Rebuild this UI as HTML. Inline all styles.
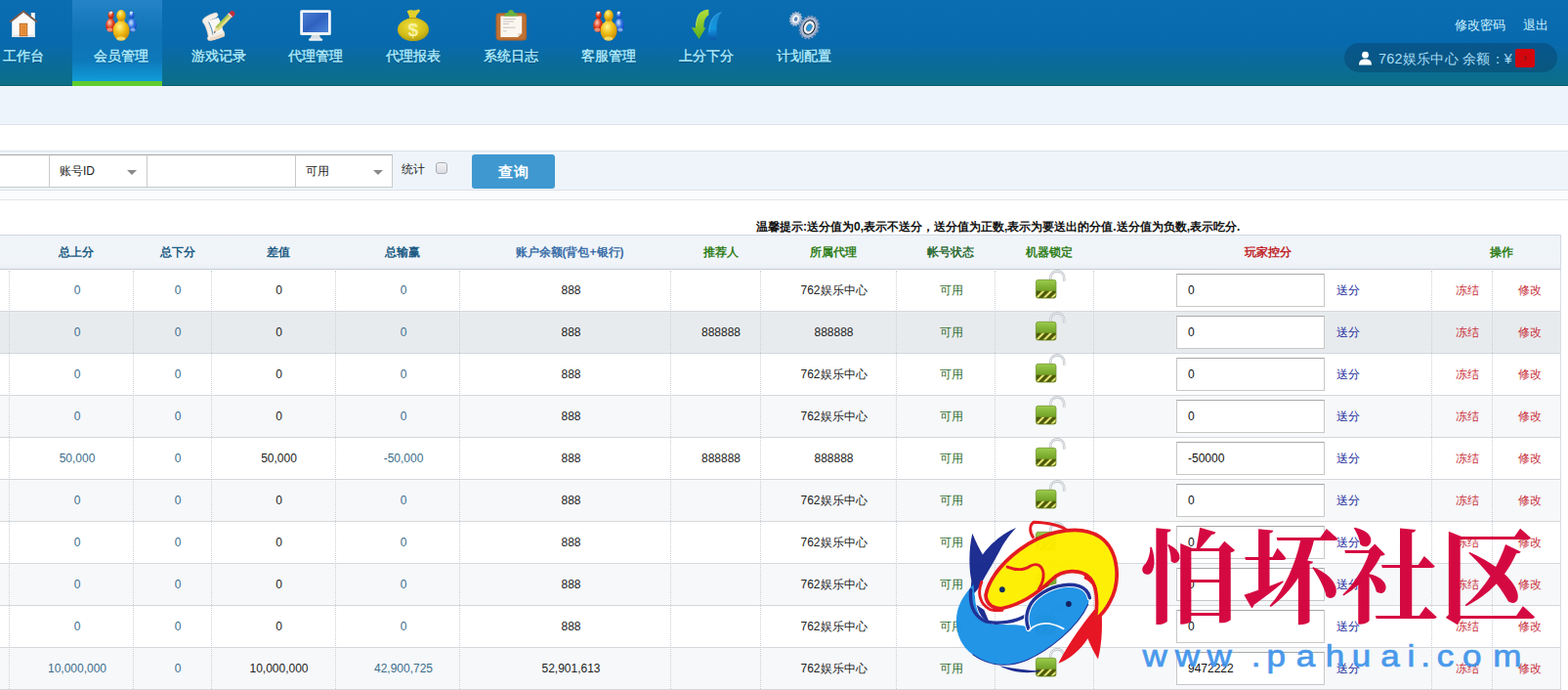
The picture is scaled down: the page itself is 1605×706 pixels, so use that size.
<!DOCTYPE html>
<html lang="zh"><head><meta charset="utf-8"><title>会员管理</title>
<style>
html,body{margin:0;padding:0;background:#fff;}
body{width:1605px;height:706px;overflow:hidden;font-family:"Liberation Sans",sans-serif;font-size:12px;color:#222;}
#pg{position:relative;width:1605px;height:706px;overflow:hidden;background:#fff;}
#pg div,#pg svg,#pg span{position:absolute;box-sizing:border-box;}
.hd{left:0;top:0;width:1605px;height:88px;background:linear-gradient(to bottom,#0a6db2 0%,#086aae 50%,#0a6b9c 72%,#0c6f86 100%);border-bottom:1px solid #0a5c74;}
.act{left:74px;top:0;width:92px;height:88px;background:linear-gradient(to bottom,#2483c6 0%,#0f74b6 40%,#0d78ba 70%,#119ad6 93%,#119ad6 100%);}
.act i{position:absolute;left:0;bottom:0;width:92px;height:5px;background:#5ecb2f;}
.nt{top:47.5px;width:100px;height:18px;line-height:18px;text-align:center;font-size:14px;color:#b2eeff;-webkit-text-stroke:0.35px #b2eeff;text-shadow:0 1px 1px rgba(0,40,80,.55);white-space:nowrap;}
.tl{top:16.5px;height:18px;line-height:18px;font-size:12.5px;color:#c8f1ff;white-space:nowrap;}
.pill{left:1376px;top:44px;width:218px;height:30px;border-radius:15px;background:rgba(6,60,100,.42);}
.pill span{left:35px;top:1px;height:30px;line-height:31px;font-size:14.4px;letter-spacing:0.25px;color:#a9def5;white-space:nowrap;}
.band1{left:0;top:88px;width:1605px;height:40px;background:#eef4fb;border-bottom:1px solid #dde3ea;}
.band2{left:0;top:154px;width:1605px;height:41px;background:#eef4fa;border-top:1px solid #dbe2e9;border-bottom:1px solid #dbe2e9;}
.band3{left:0;top:195px;width:1605px;height:10px;background:#fbfcfe;border-bottom:1px solid #e3e7ec;}
.fi{top:158px;height:34px;background:#fff;border:1px solid #c9c9c9;border-top-color:#a8a8a8;line-height:33px;font-size:12px;color:#222;padding-left:10px;white-space:nowrap;}
.car{width:0;height:0;border-left:5px solid transparent;border-right:5px solid transparent;border-top:5px solid #8a8a8a;top:174px;}
.btn{left:483px;top:158px;width:85px;height:35px;background:#3f98cf;border-radius:3px;color:#fff;font-weight:bold;font-size:15px;line-height:35px;text-align:center;letter-spacing:1px;}
.cb{left:446px;top:166px;width:12px;height:12px;border:1px solid #a9adb5;border-radius:3px;background:linear-gradient(#f2f2f4,#dcdde2);}
.hint{left:774px;top:224px;height:16px;line-height:16px;font-weight:bold;font-size:12px;color:#111;white-space:nowrap;}
.thead{left:0;top:240px;width:1598px;height:36px;background:linear-gradient(#eff4f9,#f1f5f9 80%,#eaeff3);border-top:1px solid #d3d9de;border-bottom:1px solid #c6cdd3;border-right:1px solid #d3d9de;box-shadow:0 1px 1px rgba(0,0,0,.06);}
.tr{left:0;width:1598px;height:43px;background:#fff;border-bottom:1px solid #d4d8dc;border-right:1px solid #d9dde1;}
.tr.alt{background:#f6f8fa;}
.tr.hov{background:#e8ebee;}
.vl{top:277px;width:0;height:430px;border-left:1px dotted #cbd0d4;}
.th{top:240.5px;width:200px;height:35px;line-height:35px;text-align:center;font-weight:bold;font-size:12px;white-space:nowrap;}
.td{width:200px;height:42px;line-height:42px;text-align:center;font-size:12px;white-space:nowrap;}
.lock{left:1058px;}
.inp{left:1204px;width:152px;height:34px;border:1px solid #c8c8c8;border-top-color:#a9a9a9;background:#fff;line-height:32px;padding-left:11px;font-size:12px;color:#111;}
.lk{height:42px;line-height:42px;font-size:12px;white-space:nowrap;}
.sf{left:1368px;color:#1b2a9c;}
.dj{left:1490px;color:#c9303a;}
.xg{left:1554px;color:#c9303a;}
.wm{left:0;top:0;}
</style></head><body>
<div id="pg">
<svg width="0" height="0" style="left:0;top:0"><defs>
<linearGradient id="lg" x1="0" y1="0" x2="0" y2="1"><stop offset="0" stop-color="#9ccc4c"/><stop offset="0.5" stop-color="#78a82c"/><stop offset="1" stop-color="#5c8818"/></linearGradient>
<g id="lk">
<path d="M17.200 11.500 V8.300 a7 7 0 0 1 14 0 V11.800" fill="none" stroke="#c3c7cc" stroke-width="2.700"/>
<path d="M17.200 11.500 V8.300 a7 7 0 0 1 14 0 V11.800" fill="none" stroke="#f4f6f8" stroke-width="0.900"/>
<rect x="2.400" y="10.300" width="20.600" height="18.800" rx="2.400" fill="url(#lg)" stroke="#6a8c22" stroke-width="0.700"/>
<path d="M2.800 21.800 h19.800 v5 a2 2 0 0 1 -2 2 h-15.800 a2 2 0 0 1 -2 -2z" fill="#4c5a0a"/>
<path d="M3 27.400 l5.600 -5.600 h3 l-6.600 6.600 h-.8z M9.600 28.600 l6.800 -6.800 h3 l-6.800 6.800z M17.400 28.600 l5.200 -5.200 v3 l-2.400 2.200z" fill="#e2e274"/>
</g>
</defs></svg>
<div class="hd"></div>
<div class="act"><i></i></div>
<!--NAV-->
<div class="nt" style="left:-26px">工作台</div>
<div class="nt" style="left:74px">会员管理</div>
<div class="nt" style="left:174px">游戏记录</div>
<div class="nt" style="left:273px">代理管理</div>
<div class="nt" style="left:373px">代理报表</div>
<div class="nt" style="left:473px">系统日志</div>
<div class="nt" style="left:573px">客服管理</div>
<div class="nt" style="left:673px">上分下分</div>
<div class="nt" style="left:773px">计划配置</div>
<svg style="left:0;top:0" width="900" height="48" viewBox="0 0 900 48">
<defs>
<radialGradient id="gy" cx="0.4" cy="0.3" r="0.8"><stop offset="0" stop-color="#fff48c"/><stop offset="0.45" stop-color="#f0bc14"/><stop offset="1" stop-color="#c07c00"/></radialGradient>
<radialGradient id="gr" cx="0.4" cy="0.3" r="0.8"><stop offset="0" stop-color="#ffd0c0"/><stop offset="0.45" stop-color="#e0401c"/><stop offset="1" stop-color="#b01808"/></radialGradient>
<radialGradient id="gb" cx="0.4" cy="0.3" r="0.8"><stop offset="0" stop-color="#d0e8ff"/><stop offset="0.45" stop-color="#2c6ee0"/><stop offset="1" stop-color="#0a3cb0"/></radialGradient>
<radialGradient id="gbag" cx="0.45" cy="0.35" r="0.75"><stop offset="0" stop-color="#f0e23a"/><stop offset="0.6" stop-color="#d2bc18"/><stop offset="1" stop-color="#9c8e10"/></radialGradient>
<linearGradient id="gmon" x1="0" y1="0" x2="1" y2="1"><stop offset="0" stop-color="#4a7ed0"/><stop offset="0.5" stop-color="#2f62c0"/><stop offset="1" stop-color="#4a84d8"/></linearGradient>
<linearGradient id="ggr" x1="0" y1="0" x2="0" y2="1"><stop offset="0" stop-color="#b4e03a"/><stop offset="1" stop-color="#5cae1c"/></linearGradient>
<linearGradient id="gbl" x1="0" y1="0" x2="0" y2="1"><stop offset="0" stop-color="#1a84cc"/><stop offset="0.6" stop-color="#1496e0"/><stop offset="1" stop-color="#0a56a8"/></linearGradient>
<g id="ppl">
 <rect x="4.2" y="7" width="3.400" height="5" fill="#d83818"/><ellipse cx="5.400" cy="16.500" rx="5" ry="7" fill="url(#gr)"/><ellipse cx="5.800" cy="5.800" rx="3" ry="3.900" fill="url(#gr)"/><ellipse cx="6" cy="3.2" rx="1.6" ry="1" fill="#ffe4dc"/><ellipse cx="4.6" cy="21" rx="2.8" ry="2" fill="#ffd8c8" opacity=".55"/>
 <rect x="25" y="7" width="3.200" height="5" fill="#2864d8"/><ellipse cx="27.300" cy="16.500" rx="4.800" ry="7" fill="url(#gb)"/><ellipse cx="26.800" cy="5.800" rx="2.800" ry="3.900" fill="url(#gb)"/><ellipse cx="26.6" cy="3.200" rx="1.500" ry="1" fill="#d8f0ff"/><ellipse cx="28.200" cy="21" rx="2.6" ry="2" fill="#b8dcff" opacity=".6"/>
 <rect x="13" y="9" width="6.600" height="6" fill="#ecb414"/><ellipse cx="16.300" cy="22" rx="8.500" ry="10.200" fill="url(#gy)"/><ellipse cx="16.2" cy="6.4" rx="4.800" ry="5.9" fill="url(#gy)"/><ellipse cx="16" cy="30" rx="4.500" ry="2" fill="#fff48a" opacity=".7"/>
</g>
</defs>
<!-- home -->
<g>
<path d="M31.800 13h4v7l-4-3z" fill="#f4f6f8"/>
<path d="M12.200 22 L24 12.500 L35.800 22 V38 H12.200z" fill="#fbfaf8"/>
<path d="M12.200 35.500h23.600V38H12.200z" fill="#e4e6ea"/>
<path d="M10 22.600 L24 11.600 L38.300 22.600" fill="none" stroke="#8a5a44" stroke-width="1.800" stroke-linejoin="miter"/>
<rect x="20.3" y="24.300" width="7.400" height="12.400" fill="#ef9c48" stroke="#b8621c" stroke-width="1"/>
<rect x="22.2" y="26.200" width="3.600" height="8.600" fill="#e88a34" stroke="#d07a2c" stroke-width=".5"/>
</g>
<!-- people -->
<use href="#ppl" x="107.800" y="9.500"/>
<use href="#ppl" x="606.800" y="9.500"/>
<!-- scroll + pencil -->
<g>
<path d="M208 19.500 c2-2.500 9-6 13.500-6.500 c2 1 2 3 .5 4.500 c-2.500 1.500-7 3-9 5 c2 3 4 9 4.500 13 c3-1 8-3 11-4 c1.500 1.500 1.800 4 0 5.500 c-4 1.500-11 4-14.500 4.500 c-1.800-.8-2.200-2.800-.8-4.200 c-.5-4-2.500-10-4.500-13 c-1.500-1.200-1.800-3.200-.7-4.800z" fill="#f4efe8" stroke="#d8cfc4" stroke-width=".6"/>
<path d="M213 21.500 c3 3 5 11 5.500 14 l10-3.500 c-1-5-3-11-5-14z" fill="#fbf8f4"/>
<path d="M215 38.500 c3-.5 10-3 14.500-4.500 c.8 1 .8 2.500 0 3.500 c-4 1.500-11 4-14 4.300 c-1-.6-1.200-2.300-.5-3.300z" fill="#ecd9c4"/>
<path d="M220.500 27.500 L234 13.500 l3.600 3.400 L224 31z" fill="#a8c850"/>
<path d="M222.200 29.200 L235.800 15.200 l1.800 1.700 L224 31z" fill="#e8dc88"/>
<path d="M220.500 27.500 L224 31 l-5.200 2.200z" fill="#f0d8a8"/><path d="M219.700 31.800l1.300 1.200-2.200 .9z" fill="#444"/>
<path d="M233 14.500 l2.800-2.800 c1.200-1 2.800-.6 3.800 .4 c1 1 1.200 2.600 .2 3.600 l-2.800 2.800z" fill="#c8303c"/>
<path d="M233 14.500 l1.200-1.200 3.800 3.600 -1.200 1.200z" fill="#e8e8e8"/>
</g>
<!-- monitor -->
<g>
<rect x="307.200" y="10.200" width="31.600" height="25.800" rx="1.500" fill="#f2f5f8"/>
<rect x="310" y="13" width="26" height="20" fill="url(#gmon)"/>
<path d="M319 36h8l1.800 4h-11.600z" fill="#d8dde2"/>
<rect x="316" y="39.600" width="14.200" height="2.200" rx="1" fill="#eef1f4"/>
</g>
<!-- money bag -->
<g>
<path d="M416.500 11.500 c2-1.500 4-1.500 6-1 c2 .6 4.500-.8 6.500-1 c1.200 .8 1 2-.2 3.200 c-1.500 1.500-3 3-3.200 5.800 h-6.500 c-.2-2.800-1.200-4.500-2.600-7z" fill="#e2d02c"/>
<ellipse cx="423" cy="30.300" rx="16" ry="11.800" fill="url(#gbag)"/>
<path d="M418.500 19 c2-1 6.500-1 9 0" stroke="#b8a414" stroke-width="1.200" fill="none"/>
<text x="422.800" y="37.200" text-anchor="middle" font-family="Liberation Sans, sans-serif" font-weight="bold" font-size="19" fill="#f7f1a4">$</text>
</g>
<!-- clipboard -->
<g>
<rect x="507.600" y="13.200" width="31.400" height="28.200" rx="3.500" fill="#b4652c"/>
<rect x="509" y="14.600" width="28.600" height="25.400" rx="2.600" fill="#c47a3c" opacity=".6"/>
<path d="M512.400 16.500 h21.800 v17.500 l-4.200 4 h-17.600z" fill="#fbf7f0"/>
<path d="M534.200 34 l-4.200 4 v-4z" fill="#e6d8c4"/>
<path d="M515 19.500h13M515 22h11M515 24.500h6M515 28.200h12.500M515 31.800h3.500" stroke="#c4bcb4" stroke-width=".9"/>
<path d="M516.200 16.500 c0-2 1.500-3.200 3.600-3.400 c.4-2 1.800-3.100 3.200-3.100 s2.800 1.100 3.200 3.100 c2.100 .2 3.600 1.400 3.600 3.400z" fill="#6cb23c"/>
</g>
<!-- arrows -->
<g>
<path d="M725.400 9.800 c-7.500 .2-12.600 4.500-13.600 18.600 l-4-.1 l7.700 11.700 l6.800-11.600 l-2-.1 c.2-6 1-10.500 5.100-12.800z" fill="url(#ggr)"/>
<path d="M717.500 12.500 c-3 2.500-4.500 7-5 14" stroke="#d4f070" stroke-width="1" fill="none" opacity=".6"/>
<path d="M739.200 11.800 c-9.500 1.800-14.200 9.500-14.600 25.200 c.2 4.500 8.500 5 9.600 1.500 c-1.800-10 -.5-19.500 5-26.700z" fill="url(#gbl)"/>
<path d="M737.500 13.200 c-7 2.500-10.800 9-11.600 20" stroke="#4ab4f0" stroke-width="1" fill="none" opacity=".55"/>
</g>
<!-- gears -->
<g>
<g transform="rotate(24 828.200 28)">
<ellipse cx="828.200" cy="28" rx="8.800" ry="11.200" fill="#9fb0cc" stroke="#8496b6" stroke-width="2.800" stroke-dasharray="2 1.400"/>
<ellipse cx="828.200" cy="28" rx="8" ry="10.400" fill="#a8b8d2"/>
<ellipse cx="828.200" cy="28" rx="5.700" ry="7.400" fill="#f2f6fb" stroke="#1a222c" stroke-width="1"/>
<ellipse cx="828.400" cy="28.200" rx="2.700" ry="3.900" fill="#249ae0" stroke="#60707c" stroke-width=".7"/>
</g>
<g transform="rotate(24 814.600 19.400)">
<ellipse cx="814.600" cy="19.400" rx="5.400" ry="6.600" fill="#b8c8dc" stroke="#a2b4cc" stroke-width="2.300" stroke-dasharray="1.500 1.200"/>
<ellipse cx="814.600" cy="19.400" rx="4.800" ry="6" fill="#b4c4da"/>
<ellipse cx="814.600" cy="19.400" rx="3.300" ry="4.100" fill="#f4f8fc"/>
<ellipse cx="814.700" cy="19.500" rx="1.700" ry="2.300" fill="#5c84b4"/>
</g>
</g>
</svg>


<div class="tl" style="left:1489px">修改密码</div>
<div class="tl" style="left:1559px">退出</div>
<div class="pill"><svg style="left:14px;top:8px" width="15" height="15" viewBox="0 0 15 15"><circle cx="7.5" cy="4.2" r="3.4" fill="#fff"/><path d="M1 14.500 c0-4.500 2.500-6 6.500-6 s6.500 1.500 6.500 6z" fill="#fff"/></svg><span>762娱乐中心 余额：¥</span><div style="left:175px;top:6px;width:20px;height:19px;background:#d4060d;border-radius:2px;color:#8a1418;font-size:13px;line-height:18px;text-align:center;font-weight:bold">&rsaquo;</div></div>
<div class="band1"></div>
<div class="band2"></div>
<div class="band3"></div>
<div class="fi" style="left:-50px;width:101px"></div>
<div class="fi" style="left:50px;width:101px">账号ID</div>
<div class="car" style="left:130px"></div>
<div class="fi" style="left:150px;width:153px"></div>
<div class="fi" style="left:302px;width:100px">可用</div>
<div class="car" style="left:382px"></div>
<div style="left:411px;top:165px;height:16px;line-height:16px;font-size:12px;color:#222">统计</div>
<div class="cb"></div>
<div class="btn">查询</div>
<div class="hint">温馨提示:送分值为0,表示不送分，送分值为正数,表示为要送出的分值.送分值为负数,表示吃分.</div>

<div class="thead"></div>
<div class="tr" style="top:276px"></div>
<div class="tr hov" style="top:319px"></div>
<div class="tr" style="top:362px"></div>
<div class="tr alt" style="top:405px"></div>
<div class="tr" style="top:448px"></div>
<div class="tr alt" style="top:491px"></div>
<div class="tr" style="top:534px"></div>
<div class="tr alt" style="top:577px"></div>
<div class="tr" style="top:620px"></div>
<div class="tr alt" style="top:663px"></div>
<div class="vl" style="left:9.0px"></div>
<div class="vl" style="left:136.0px"></div>
<div class="vl" style="left:216.0px"></div>
<div class="vl" style="left:343.0px"></div>
<div class="vl" style="left:470.0px"></div>
<div class="vl" style="left:686.0px"></div>
<div class="vl" style="left:778.0px"></div>
<div class="vl" style="left:917.0px"></div>
<div class="vl" style="left:1018.0px"></div>
<div class="vl" style="left:1119.0px"></div>
<div class="vl" style="left:1465.0px"></div>
<div class="vl" style="left:1527.0px"></div>
<div class="th" style="left:-22px;color:#1d5c85">总上分</div>
<div class="th" style="left:82px;color:#1d5c85">总下分</div>
<div class="th" style="left:185px;color:#1d5c85">差值</div>
<div class="th" style="left:312px;color:#1d5c85">总输赢</div>
<div class="th" style="left:483px;color:#3a6ea8">账户余额(背包+银行)</div>
<div class="th" style="left:638px;color:#2f7d18">推荐人</div>
<div class="th" style="left:753px;color:#2f7d18">所属代理</div>
<div class="th" style="left:873px;color:#2d6b35">帐号状态</div>
<div class="th" style="left:974px;color:#2f7d18">机器锁定</div>
<div class="th" style="left:1198px;color:#c0242a">玩家控分</div>
<div class="th" style="left:1437px;color:#2f7d18">操作</div>
<div class="td" style="left:-21px;top:276px;color:#3c6e8c">0</div>
<div class="td" style="left:82px;top:276px;color:#3c6e8c">0</div>
<div class="td" style="left:185.5px;top:276px;color:#222">0</div>
<div class="td" style="left:313px;top:276px;color:#3c6e8c">0</div>
<div class="td" style="left:484.5px;top:276px;color:#222">888</div>
<div class="td" style="left:753.5px;top:276px;color:#222">762娱乐中心</div>
<div class="td" style="left:873.5px;top:276px;color:#2c6a2c">可用</div>
<svg class="lock" style="top:276px" width="34" height="32" viewBox="0 0 34 32"><use href="#lk"/></svg>
<div class="inp" style="top:280px">0</div>
<div class="lk sf" style="top:276px">送分</div>
<div class="lk dj" style="top:276px">冻结</div>
<div class="lk xg" style="top:276px">修改</div>
<div class="td" style="left:-21px;top:319px;color:#3c6e8c">0</div>
<div class="td" style="left:82px;top:319px;color:#3c6e8c">0</div>
<div class="td" style="left:185.5px;top:319px;color:#222">0</div>
<div class="td" style="left:313px;top:319px;color:#3c6e8c">0</div>
<div class="td" style="left:484.5px;top:319px;color:#222">888</div>
<div class="td" style="left:638px;top:319px;color:#222">888888</div>
<div class="td" style="left:753.5px;top:319px;color:#222">888888</div>
<div class="td" style="left:873.5px;top:319px;color:#2c6a2c">可用</div>
<svg class="lock" style="top:319px" width="34" height="32" viewBox="0 0 34 32"><use href="#lk"/></svg>
<div class="inp" style="top:323px">0</div>
<div class="lk sf" style="top:319px">送分</div>
<div class="lk dj" style="top:319px">冻结</div>
<div class="lk xg" style="top:319px">修改</div>
<div class="td" style="left:-21px;top:362px;color:#3c6e8c">0</div>
<div class="td" style="left:82px;top:362px;color:#3c6e8c">0</div>
<div class="td" style="left:185.5px;top:362px;color:#222">0</div>
<div class="td" style="left:313px;top:362px;color:#3c6e8c">0</div>
<div class="td" style="left:484.5px;top:362px;color:#222">888</div>
<div class="td" style="left:753.5px;top:362px;color:#222">762娱乐中心</div>
<div class="td" style="left:873.5px;top:362px;color:#2c6a2c">可用</div>
<svg class="lock" style="top:362px" width="34" height="32" viewBox="0 0 34 32"><use href="#lk"/></svg>
<div class="inp" style="top:366px">0</div>
<div class="lk sf" style="top:362px">送分</div>
<div class="lk dj" style="top:362px">冻结</div>
<div class="lk xg" style="top:362px">修改</div>
<div class="td" style="left:-21px;top:405px;color:#3c6e8c">0</div>
<div class="td" style="left:82px;top:405px;color:#3c6e8c">0</div>
<div class="td" style="left:185.5px;top:405px;color:#222">0</div>
<div class="td" style="left:313px;top:405px;color:#3c6e8c">0</div>
<div class="td" style="left:484.5px;top:405px;color:#222">888</div>
<div class="td" style="left:753.5px;top:405px;color:#222">762娱乐中心</div>
<div class="td" style="left:873.5px;top:405px;color:#2c6a2c">可用</div>
<svg class="lock" style="top:405px" width="34" height="32" viewBox="0 0 34 32"><use href="#lk"/></svg>
<div class="inp" style="top:409px">0</div>
<div class="lk sf" style="top:405px">送分</div>
<div class="lk dj" style="top:405px">冻结</div>
<div class="lk xg" style="top:405px">修改</div>
<div class="td" style="left:-21px;top:448px;color:#3c6e8c">50,000</div>
<div class="td" style="left:82px;top:448px;color:#3c6e8c">0</div>
<div class="td" style="left:185.5px;top:448px;color:#222">50,000</div>
<div class="td" style="left:313px;top:448px;color:#3c6e8c">-50,000</div>
<div class="td" style="left:484.5px;top:448px;color:#222">888</div>
<div class="td" style="left:638px;top:448px;color:#222">888888</div>
<div class="td" style="left:753.5px;top:448px;color:#222">888888</div>
<div class="td" style="left:873.5px;top:448px;color:#2c6a2c">可用</div>
<svg class="lock" style="top:448px" width="34" height="32" viewBox="0 0 34 32"><use href="#lk"/></svg>
<div class="inp" style="top:452px">-50000</div>
<div class="lk sf" style="top:448px">送分</div>
<div class="lk dj" style="top:448px">冻结</div>
<div class="lk xg" style="top:448px">修改</div>
<div class="td" style="left:-21px;top:491px;color:#3c6e8c">0</div>
<div class="td" style="left:82px;top:491px;color:#3c6e8c">0</div>
<div class="td" style="left:185.5px;top:491px;color:#222">0</div>
<div class="td" style="left:313px;top:491px;color:#3c6e8c">0</div>
<div class="td" style="left:484.5px;top:491px;color:#222">888</div>
<div class="td" style="left:753.5px;top:491px;color:#222">762娱乐中心</div>
<div class="td" style="left:873.5px;top:491px;color:#2c6a2c">可用</div>
<svg class="lock" style="top:491px" width="34" height="32" viewBox="0 0 34 32"><use href="#lk"/></svg>
<div class="inp" style="top:495px">0</div>
<div class="lk sf" style="top:491px">送分</div>
<div class="lk dj" style="top:491px">冻结</div>
<div class="lk xg" style="top:491px">修改</div>
<div class="td" style="left:-21px;top:534px;color:#3c6e8c">0</div>
<div class="td" style="left:82px;top:534px;color:#3c6e8c">0</div>
<div class="td" style="left:185.5px;top:534px;color:#222">0</div>
<div class="td" style="left:313px;top:534px;color:#3c6e8c">0</div>
<div class="td" style="left:484.5px;top:534px;color:#222">888</div>
<div class="td" style="left:753.5px;top:534px;color:#222">762娱乐中心</div>
<div class="td" style="left:873.5px;top:534px;color:#2c6a2c">可用</div>
<svg class="lock" style="top:534px" width="34" height="32" viewBox="0 0 34 32"><use href="#lk"/></svg>
<div class="inp" style="top:538px">0</div>
<div class="lk sf" style="top:534px">送分</div>
<div class="lk dj" style="top:534px">冻结</div>
<div class="lk xg" style="top:534px">修改</div>
<div class="td" style="left:-21px;top:577px;color:#3c6e8c">0</div>
<div class="td" style="left:82px;top:577px;color:#3c6e8c">0</div>
<div class="td" style="left:185.5px;top:577px;color:#222">0</div>
<div class="td" style="left:313px;top:577px;color:#3c6e8c">0</div>
<div class="td" style="left:484.5px;top:577px;color:#222">888</div>
<div class="td" style="left:753.5px;top:577px;color:#222">762娱乐中心</div>
<div class="td" style="left:873.5px;top:577px;color:#2c6a2c">可用</div>
<svg class="lock" style="top:577px" width="34" height="32" viewBox="0 0 34 32"><use href="#lk"/></svg>
<div class="inp" style="top:581px">0</div>
<div class="lk sf" style="top:577px">送分</div>
<div class="lk dj" style="top:577px">冻结</div>
<div class="lk xg" style="top:577px">修改</div>
<div class="td" style="left:-21px;top:620px;color:#3c6e8c">0</div>
<div class="td" style="left:82px;top:620px;color:#3c6e8c">0</div>
<div class="td" style="left:185.5px;top:620px;color:#222">0</div>
<div class="td" style="left:313px;top:620px;color:#3c6e8c">0</div>
<div class="td" style="left:484.5px;top:620px;color:#222">888</div>
<div class="td" style="left:753.5px;top:620px;color:#222">762娱乐中心</div>
<div class="td" style="left:873.5px;top:620px;color:#2c6a2c">可用</div>
<svg class="lock" style="top:620px" width="34" height="32" viewBox="0 0 34 32"><use href="#lk"/></svg>
<div class="inp" style="top:624px">0</div>
<div class="lk sf" style="top:620px">送分</div>
<div class="lk dj" style="top:620px">冻结</div>
<div class="lk xg" style="top:620px">修改</div>
<div class="td" style="left:-21px;top:663px;color:#3c6e8c">10,000,000</div>
<div class="td" style="left:82px;top:663px;color:#3c6e8c">0</div>
<div class="td" style="left:185.5px;top:663px;color:#222">10,000,000</div>
<div class="td" style="left:313px;top:663px;color:#3c6e8c">42,900,725</div>
<div class="td" style="left:484.5px;top:663px;color:#222">52,901,613</div>
<div class="td" style="left:753.5px;top:663px;color:#222">762娱乐中心</div>
<div class="td" style="left:873.5px;top:663px;color:#2c6a2c">可用</div>
<svg class="lock" style="top:663px" width="34" height="32" viewBox="0 0 34 32"><use href="#lk"/></svg>
<div class="inp" style="top:667px">9472222</div>
<div class="lk sf" style="top:663px">送分</div>
<div class="lk dj" style="top:663px">冻结</div>
<div class="lk xg" style="top:663px">修改</div>
<svg class="wm" width="1605" height="706" viewBox="0 0 1605 706">
<g transform="translate(960,520) scale(0.2635)" opacity="0.97">
<!-- navy tail of blue fish -->
<path d="M134 98 C120 160 120 230 130 280 C131 302 124 326 114 348 C140 338 160 312 172 286 C192 250 216 210 238 170 C258 130 282 100 304 76 C254 96 208 134 174 180 C160 156 146 128 134 98Z" fill="#17288e"/>
<!-- blue fish body -->
<path d="M138 296 C112 326 90 352 78 392 C60 462 80 528 135 568 C200 614 275 618 345 590 C432 552 545 462 584 372 C592 346 580 318 545 305 C500 290 430 305 388 345 C352 378 338 425 350 462 C318 446 270 456 212 450 C168 440 146 402 144 342 C140 326 140 310 138 296Z" fill="#1c92e6"/>
<path d="M135 568 C200 614 275 618 345 590 C432 552 545 462 584 372" fill="none" stroke="#1a2c94" stroke-width="4"/>
<!-- navy inner outline -->
<path d="M128 318 C122 380 142 420 186 440 C240 452 300 440 340 418" fill="none" stroke="#1a2c94" stroke-width="13" stroke-linecap="round"/>
<path d="M158 386 C164 408 176 424 192 436 L176 398Z" fill="#17288e" stroke="#17288e" stroke-width="9"/>
<!-- head outline -->
<path d="M352 468 C334 420 350 372 388 342 C432 305 498 288 548 302 C572 310 586 326 590 348" fill="none" stroke="#f8fbff" stroke-width="21" stroke-linecap="round"/>
<path d="M352 468 C334 420 350 372 388 342 C432 305 498 288 548 302 C572 310 586 326 590 348" fill="none" stroke="#1a2c94" stroke-width="13" stroke-linecap="round"/>
<path d="M356 472 C392 440 440 442 488 468" fill="none" stroke="#f4f8ff" stroke-width="7" stroke-linecap="round"/>
<path d="M240 612 C290 640 352 644 402 632 C350 630 292 624 240 612Z" fill="#17288e"/>
<circle cx="508" cy="372" r="11" fill="#0c1c5c"/>
<!-- red tail of yellow fish -->
<path d="M606 396 C566 446 514 516 468 602 C510 590 556 548 582 506 C594 536 608 562 622 586 C640 520 640 440 634 372 C625 384 616 392 606 396Z" fill="#e60f1e"/>
<!-- dorsal fin outline -->
<path d="M372 116 C354 92 356 64 372 54 C420 56 468 62 500 84" fill="none" stroke="#e4141c" stroke-width="11"/>
<!-- yellow body -->
<path d="M186 338 C198 270 262 194 352 138 C440 84 560 64 630 112 C704 164 712 284 668 364 C652 396 634 416 612 432 C620 376 622 308 592 272 C556 234 484 238 444 276 C400 318 332 372 252 388 C216 394 188 372 186 338Z" fill="#ffef00" stroke="#e4141c" stroke-width="14" stroke-linejoin="round"/>
<!-- gill / pectoral line -->
<path d="M270 228 C300 240 334 242 360 224 C388 210 406 226 410 252 C412 276 404 296 392 314" fill="none" stroke="#e4141c" stroke-width="11" stroke-linecap="round"/>
<path d="M170 286 C152 330 164 372 200 392 C216 398 232 398 250 396" fill="none" stroke="#e4141c" stroke-width="11" stroke-linecap="round"/>
<path d="M572 256 C598 268 616 296 618 330 C608 300 592 280 570 272Z" fill="#e4101c" stroke="#e4101c" stroke-width="4"/>
<circle cx="250" cy="316" r="11" fill="#0c2a5c"/>
</g>

<g fill="#d4003b" opacity="0.96">
<text transform="scale(1,1.0398)" x="1167 1271 1372.5 1473.5" y="605.1" font-family="&quot;Liberation Serif&quot;, &quot;Noto Serif CJK SC&quot;, serif" font-weight="bold" font-size="100.5" fill="#d4003b">怕坏社区</text>
</g>
<text transform="scale(1.13,1)" x="1035.0 1064.4 1093.4 1133.4 1147.3 1174.2 1200.7 1224.5 1250.6 1274.8 1286.9 1301.6 1324.8 1352.4" y="682.3" font-family="Liberation Sans, sans-serif" font-weight="normal" font-size="31" fill="#3c92ea" stroke="#3c92ea" stroke-width="0.7" opacity="0.93">www.pahuai.com</text>
</svg>
</div></body></html>
